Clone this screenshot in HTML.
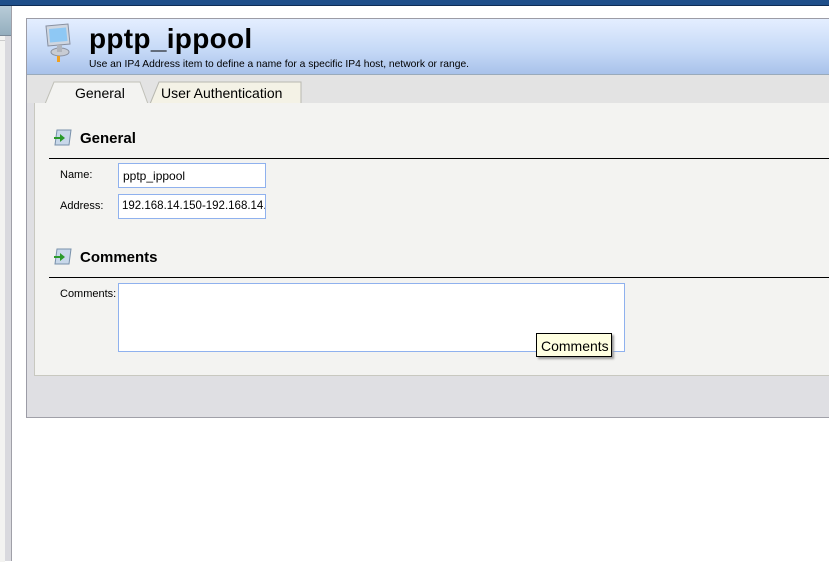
<!DOCTYPE html>
<html><head><style>
body{margin:0;width:829px;height:561px;position:relative;background:#fff;font-family:"Liberation Sans",sans-serif;overflow:hidden}
.a{position:absolute}
.lbl{font-size:11px;color:#000}
.inp{position:absolute;background:#fff;border:1px solid #8fb1ee;font-size:12px;box-sizing:border-box;padding:5px 0 0 4px;height:25px}
</style></head><body>
<div class="a" style="left:0;top:0;width:829px;height:5px;background:#1f4f8a;border-bottom:1px solid #0e2c55"></div>
<div class="a" style="left:0;top:6px;width:12px;height:555px;background:#f3f3f1"></div>
<div class="a" style="left:5px;top:6px;width:6px;height:555px;background:#d9d9de;border-right:1px solid #a0a0a8"></div>
<div class="a" style="left:0;top:6px;width:11px;height:29px;background:linear-gradient(#b8ccd8,#94aebe);border-bottom:1px solid #7a8a98"></div>
<div class="a" style="left:0;top:40px;width:5px;height:521px;background:#f3f3f1;border-top:1px solid #ccc"></div>

<div class="a" style="left:26px;top:18px;width:803px;height:398px;background:#dfdfe3;border-left:1px solid #9c9ca6;border-top:1px solid #9c9ca6;border-bottom:1px solid #a0a0a8"></div>
<div class="a" style="left:27px;top:19px;width:802px;height:55px;background:linear-gradient(#e4eeff,#c4d8f6 60%,#a8c2ea);border-bottom:1px solid #9ab"></div>
<svg class="a" style="left:40px;top:22px" width="36" height="42" viewBox="0 0 36 42">
<path d="M6 4 L28 2 L30 22 L8 24 Z" fill="#cfd6e0" stroke="#8890a0"/>
<path d="M9 7 L26 5.5 L27.5 19 L10 20.5 Z" fill="#8ec8f4"/>
<ellipse cx="20" cy="30" rx="9" ry="4" fill="#c8ccd4" stroke="#8890a0"/>
<rect x="17" y="23" width="5" height="7" fill="#b0b4bc"/>
<rect x="17" y="34" width="3" height="6" fill="#f0a020"/>
</svg>
<div class="a" style="left:89px;top:23px;font-size:28px;font-weight:bold;color:#000;letter-spacing:0.3px">pptp_ippool</div>
<div class="a" style="left:89px;top:59px;font-size:10.3px;color:#000">Use an IP4 Address item to define a name for a specific IP4 host, network or range.</div>

<div class="a" style="left:27px;top:75px;width:802px;height:28px;background:#e3e3e3"></div>
<svg class="a" style="left:44px;top:80px" width="260" height="25">
<path d="M1 24 L10 2 L96 2 L104 24 Z" fill="#f3f3f1" stroke="#c0c0b8"/>
<path d="M106 24 L115 2 L257 2 L257 24 Z" fill="#f4f2e6" stroke="#b8b8b0"/>
</svg>
<div class="a" style="left:75px;top:85px;font-size:14px">General</div>
<div class="a" style="left:161px;top:85px;font-size:14px">User Authentication</div>

<div class="a" style="left:34px;top:103px;width:795px;height:272px;background:#f3f3f1;border-left:1px solid #c8c8c0;border-bottom:1px solid #c8c8c0"></div>

<svg class="a" style="left:52px;top:128px" width="22" height="20"><path d="M5 2 H19 L17 17 H3 Z" fill="#c8d8ea" stroke="#7890aa"/><path d="M2 9 H8 V6 L13 10 L8 14 V11 H2 Z" fill="#2a9a2a"/></svg>
<div class="a" style="left:80px;top:130px;font-size:15px;font-weight:bold">General</div>
<div class="a" style="left:49px;top:158px;width:780px;height:1px;background:#000"></div>
<div class="a lbl" style="left:60px;top:169px">Name:</div>
<div class="inp" style="left:118px;top:163px;width:148px">pptp_ippool</div>
<div class="a lbl" style="left:60px;top:200px">Address:</div>
<div class="inp" style="left:118px;top:194px;width:148px;overflow:hidden;white-space:nowrap;font-size:11.5px;padding-left:3px">192.168.14.150-192.168.14.200</div>

<svg class="a" style="left:52px;top:247px" width="22" height="20"><path d="M5 2 H19 L17 17 H3 Z" fill="#c8d8ea" stroke="#7890aa"/><path d="M2 9 H8 V6 L13 10 L8 14 V11 H2 Z" fill="#2a9a2a"/></svg>
<div class="a" style="left:80px;top:249px;font-size:15px;font-weight:bold">Comments</div>
<div class="a" style="left:49px;top:277px;width:780px;height:1px;background:#000"></div>
<div class="a lbl" style="left:60px;top:288px">Comments:</div>
<div class="a" style="left:118px;top:283px;width:505px;height:67px;background:#fff;border:1px solid #8fb1ee"></div>
<div class="a" style="left:536px;top:333px;width:76px;height:24px;box-sizing:border-box;background:#ffffe1;border:1px solid #000;box-shadow:2px 2px 2px #999;font-size:14px;padding:4px 0 0 4px">Comments</div>
</body></html>
